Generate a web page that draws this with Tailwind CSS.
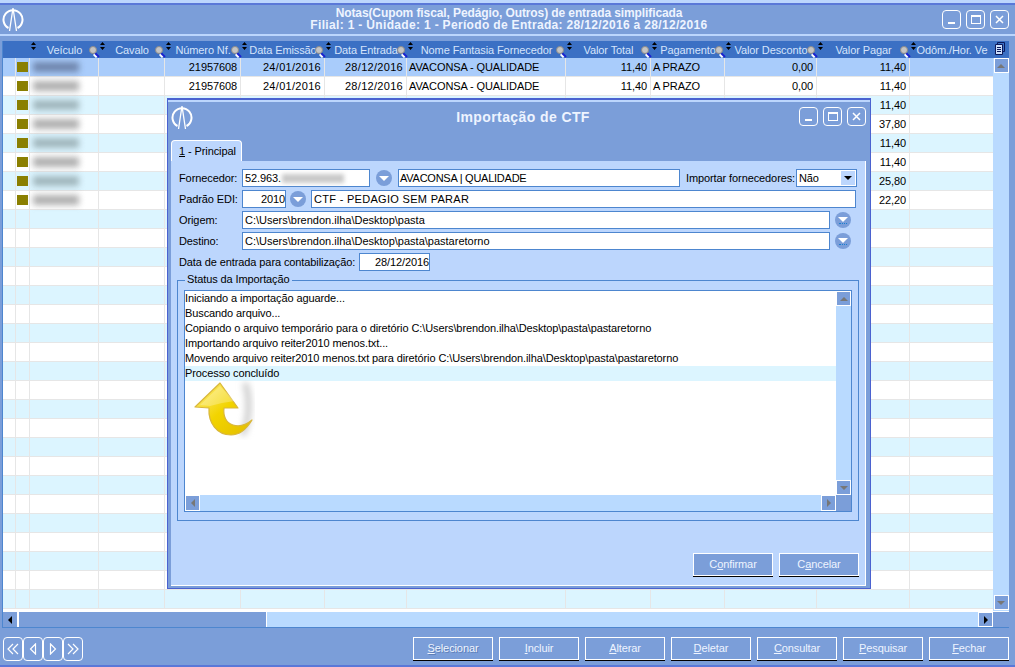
<!DOCTYPE html>
<html lang="pt-BR">
<head>
  <meta charset="UTF-8">
  <title>Notas</title>
  <script src="https://cdn.jsdelivr.net/npm/@tailwindcss/browser@4"></script>
</head>
<body class="w-[1015px] h-[667px] overflow-hidden relative bg-[#7b9ed9] font-['Liberation_Sans',sans-serif] text-[11px] tracking-[-0.1px] leading-none text-black select-none">

  <!-- main window -->
  <div class="h-[5px] bg-[#bcd6fd] border-b-2 border-[#5a78d8]"></div>
  <header class="h-[28px] mx-[3px] flex items-center relative">
    <svg class="w-[22px] h-[24px] -ml-[1px]" viewBox="0 0 22 24" fill="none" stroke="#fff" stroke-width="2"><path d="M6.500 21A9.500 9.500 0 1 1 15.500 21"/><path d="M7.500 24 11 1l3.500 23" stroke-width="1.300"/></svg>
    <div class="flex-1 text-center font-bold text-[#eef4ff] text-[12px] leading-[12px] pl-[52px] whitespace-nowrap">
      <div class="tracking-[-0.1px]">Notas(Cupom fiscal, Pedágio, Outros) de entrada simplificada</div>
      <div class="tracking-[0.33px]">Filial: 1 - Unidade: 1 - Período de Entrada: 28/12/2016 a 28/12/2016</div>
    </div>
    <div class="flex gap-[5px] mr-[3px]">
      <button class="w-[19px] h-[19px] border border-white rounded-[4px] flex items-end justify-center pb-[4px]"><span class="w-[7px] h-[2px] bg-white"></span></button>
      <button class="w-[19px] h-[19px] border border-white rounded-[4px] flex items-center justify-center"><span class="w-[10px] h-[9px] border border-white border-t-2"></span></button>
      <button class="w-[19px] h-[19px] border border-white rounded-[4px] flex items-center justify-center"><svg class="w-[9px] h-[9px]" viewBox="0 0 9 9" stroke="#fff" stroke-width="1.500"><path d="M1 1l7 7M8 1 1 8"/></svg></button>
    </div>
  </header>
  <div class="h-[2px] bg-[#bcd6fd] mt-[1px] mb-[5px]"></div>

  <!-- grid -->
  <section class="mx-[2px] h-[587px] w-[1007px] border-l border-b border-[#4d86cf] flex flex-col relative bg-white">
    <div id="head" class="h-[17px] flex bg-[#3b70c4] text-[#d5e4fb] shrink-0 relative">
      <svg class="absolute right-[4px] top-[1px] w-[10px] h-[13px] z-10" viewBox="0 0 10 13" fill="none" stroke="#0b1a5c"><path d="M2.500 2.500V.5h7v9H8"/><path d="M.5 2.500h7v10h-7z" fill="#cfe0fb"/><path d="M2 5.500h4M2 7.500h4M2 9.500h4"/></svg>
    </div>
    <div class="flex-1 flex min-h-0">
      <div id="rows" class="w-[991px] overflow-hidden"></div>
      <div class="w-[16px] bg-[#b9daff] flex flex-col justify-between items-center pb-[1px]">
        <div class="w-[15px] h-[15px] bg-[#7b9ed9] border border-white flex items-center justify-center"><span class="border-x-[4px] border-x-transparent border-b-[4px] border-b-[#777] mt-[1px]"></span></div>
        <div class="w-[15px] h-[15px] bg-[#7b9ed9] border border-white flex items-center justify-center"><span class="border-x-[4px] border-x-transparent border-t-[4px] border-t-[#777]"></span></div>
      </div>
    </div>
    <div class="h-[16px] shrink-0 flex bg-[#b9daff] border-t border-white">
      <div class="w-[16px] bg-[#7b9ed9] border-r-2 border-white flex items-center justify-center"><span class="border-y-[4px] border-y-transparent border-r-[4px] border-r-black"></span></div>
      <div class="w-[248px] bg-[#7b9ed9] border-r border-white"></div>
      <div class="flex-1"></div>
      <div class="w-[15px] bg-[#7b9ed9] border border-white flex items-center justify-center"><span class="border-y-[4px] border-y-transparent border-l-[4px] border-l-black"></span></div>
      <div class="w-[16px] bg-[#7b9ed9]"></div>
    </div>
  </section>

  <!-- footer -->
  <footer class="flex items-start justify-between pl-[3px] pr-[6px] pt-[9px]">
    <div class="flex">
      <button class="w-[20px] h-[24px] border border-white rounded-[4px] flex items-center justify-center"><svg class="w-[12px] h-[12px]" viewBox="0 0 12 12" fill="none" stroke="#fff" stroke-width="1.200"><path d="M6 1 1 6l5 5M11 1 6 6l5 5"/></svg></button>
      <button class="w-[20px] h-[24px] border border-white rounded-[4px] flex items-center justify-center"><svg class="w-[8px] h-[12px]" viewBox="0 0 8 12" fill="none" stroke="#fff" stroke-width="1.200"><path d="M6.500 1 1.500 6l5 5z"/></svg></button>
      <button class="w-[20px] h-[24px] border border-white rounded-[4px] flex items-center justify-center"><svg class="w-[8px] h-[12px]" viewBox="0 0 8 12" fill="none" stroke="#fff" stroke-width="1.200"><path d="M1.500 1l5 5-5 5z"/></svg></button>
      <button class="w-[20px] h-[24px] border border-white rounded-[4px] flex items-center justify-center"><svg class="w-[12px] h-[12px]" viewBox="0 0 12 12" fill="none" stroke="#fff" stroke-width="1.200"><path d="m1 1 5 5-5 5M6 1l5 5-5 5"/></svg></button>
    </div>
    <div class="flex gap-[6px]">
      <button class="w-[80px] h-[23px] border border-white shadow-[0_1px_0_#000] text-[#eef4ff] [text-shadow:1px_1px_0_#5f7fb8]"><u>S</u>elecionar</button>
      <button class="w-[80px] h-[23px] border border-white shadow-[0_1px_0_#000] text-[#eef4ff]"><u>I</u>ncluir</button>
      <button class="w-[80px] h-[23px] border border-white shadow-[0_1px_0_#000] text-[#eef4ff]"><u>A</u>lterar</button>
      <button class="w-[80px] h-[23px] border border-white shadow-[0_1px_0_#000] text-[#eef4ff]"><u>D</u>eletar</button>
      <button class="w-[80px] h-[23px] border border-white shadow-[0_1px_0_#000] text-[#eef4ff]"><u>C</u>onsultar</button>
      <button class="w-[80px] h-[23px] border border-white shadow-[0_1px_0_#000] text-[#eef4ff]"><u>P</u>esquisar</button>
      <button class="w-[80px] h-[23px] border border-white shadow-[0_1px_0_#000] text-[#eef4ff]"><u>F</u>echar</button>
    </div>
  </footer>
  <div class="absolute left-0 right-0 bottom-0 h-[2px] bg-[#5a78d8]"></div>

  <!-- dialog -->
  <div class="absolute left-[167px] top-[98px] w-[704px] h-[491px] bg-[#7b9ed9] border border-[#4a62d0] border-t-2 flex flex-col pl-[3px] pr-[4px] pb-[2px]">
    <div class="h-[2px] bg-[#bcd6fd] -mx-[3px] -mr-[4px]"></div>
    <div class="h-[27px] flex items-center shrink-0 relative mt-[1px]">
      <svg class="w-[22px] h-[24px]" viewBox="0 0 22 24" fill="none" stroke="#fff" stroke-width="2"><path d="M6.500 21A9.500 9.500 0 1 1 15.500 21"/><path d="M7.500 24 11 1l3.500 23" stroke-width="1.300"/></svg>
      <div class="flex-1 text-center font-bold text-[#eef4ff] text-[14px] tracking-[0.4px] pl-[54px]">Importação de CTF</div>
      <div class="flex gap-[5px]">
        <button class="w-[19px] h-[19px] border border-white rounded-[4px] flex items-end justify-center pb-[4px]"><span class="w-[7px] h-[2px] bg-white"></span></button>
        <button class="w-[19px] h-[19px] border border-white rounded-[4px] flex items-center justify-center"><span class="w-[10px] h-[9px] border border-white border-t-2"></span></button>
        <button class="w-[19px] h-[19px] border border-white rounded-[4px] flex items-center justify-center"><svg class="w-[9px] h-[9px]" viewBox="0 0 9 9" stroke="#fff" stroke-width="1.500"><path d="M1 1l7 7M8 1 1 8"/></svg></button>
      </div>
    </div>
    <div class="mt-[10px] h-[21px] shrink-0 flex">
      <div class="w-[71px] h-[21px] bg-[#bcd6fd] border border-b-0 border-white rounded-t-[4px] flex items-center pl-[7px] whitespace-nowrap"><span><u>1</u> - Principal</span></div>
    </div>
    <div class="flex-1 bg-[#bcd6fd] border-r border-b border-white pt-[8px] pl-[8px] pr-[6px] flex flex-col min-h-0 whitespace-nowrap">
      <div class="flex items-center h-[18px]">
        <span class="w-[63px]">Fornecedor:</span>
        <div class="w-[128px] h-[18px] bg-white border border-[#4d86cf] flex items-center pl-[2px]">52.963.<span class="w-[62px] h-[9px] ml-[1px] bg-[#c9c9c9] blur-[2px]"></span></div>
        <button class="w-[16px] h-[16px] ml-[6px] rounded-full bg-[#7b9ed9] flex items-center justify-center"><span class="border-x-[5px] border-x-transparent border-t-[5px] border-t-white"></span></button>
        <div class="w-[282px] h-[18px] ml-[6px] bg-white border border-[#4d86cf] flex items-center pl-[1px] tracking-[-0.25px]">AVACONSA | QUALIDADE</div>
        <span class="ml-[6px] w-[110px]">Importar fornecedores:</span>
        <div class="w-[61px] h-[18px] bg-white border border-[#4d86cf] flex items-center justify-between pl-[2px]">Não<span class="w-[14px] h-[14px] mr-[1px] bg-[#bcd6fd] flex items-center justify-center"><span class="border-x-[4px] border-x-transparent border-t-[4px] border-t-black"></span></span></div>
      </div>
      <div class="flex items-center h-[18px] mt-[3px]">
        <span class="w-[63px]">Padrão EDI:</span>
        <div class="w-[44px] h-[18px] bg-white border border-[#4d86cf] flex items-center justify-end">2010</div>
        <button class="w-[16px] h-[16px] ml-[4px] rounded-full bg-[#7b9ed9] flex items-center justify-center"><span class="border-x-[5px] border-x-transparent border-t-[5px] border-t-white"></span></button>
        <div class="w-[545px] h-[18px] ml-[5px] bg-white border border-[#4d86cf] flex items-center pl-[2px] tracking-[0.3px]">CTF - PEDAGIO SEM PARAR</div>
      </div>
      <div class="flex items-center h-[18px] mt-[3px]">
        <span class="w-[63px]">Origem:</span>
        <div class="w-[588px] h-[18px] bg-white border border-[#4d86cf] flex items-center pl-[2px] tracking-normal">C:\Users\brendon.ilha\Desktop\pasta</div>
        <button class="w-[16px] h-[16px] ml-[5px] rounded-full bg-[#7b9ed9] flex flex-col items-center justify-center gap-[1px]"><span class="border-x-[5px] border-x-transparent border-t-[5px] border-t-white"></span><span class="w-[8px] h-[1px] border-t border-dotted border-[#1a7fd0]"></span></button>
      </div>
      <div class="flex items-center h-[18px] mt-[3px]">
        <span class="w-[63px]">Destino:</span>
        <div class="w-[588px] h-[18px] bg-white border border-[#4d86cf] flex items-center pl-[2px] tracking-normal">C:\Users\brendon.ilha\Desktop\pasta\pastaretorno</div>
        <button class="w-[16px] h-[16px] ml-[5px] rounded-full bg-[#7b9ed9] flex flex-col items-center justify-center gap-[1px]"><span class="border-x-[5px] border-x-transparent border-t-[5px] border-t-white"></span><span class="w-[8px] h-[1px] border-t border-dotted border-[#1a7fd0]"></span></button>
      </div>
      <div class="flex items-center h-[18px] mt-[3px]">
        <span class="w-[180px]">Data de entrada para contabilização:</span>
        <div class="w-[71px] h-[18px] bg-white border border-[#4d86cf] flex items-center justify-end">28/12/2016</div>
      </div>

      <fieldset class="border border-[#4d86cf] -ml-[2px] mt-[3px] w-[682px] h-[247px] px-[6px] pb-[6px]">
        <legend class="ml-[1px] px-[2px] h-[13px]">Status da Importação</legend>
        <div class="h-[222px] mt-[3px] bg-white border border-[#4d86cf] relative flex flex-col">
          <div class="flex-1 flex min-h-0">
            <div class="flex-1 leading-[15px]">
              <div class="h-[15px]">Iniciando a importação aguarde...</div>
              <div class="h-[15px]">Buscando arquivo...</div>
              <div class="h-[15px]">Copiando o arquivo temporário para o diretório C:\Users\brendon.ilha\Desktop\pasta\pastaretorno</div>
              <div class="h-[15px]">Importando arquivo reiter2010 menos.txt...</div>
              <div class="h-[15px]">Movendo arquivo reiter2010 menos.txt para diretório C:\Users\brendon.ilha\Desktop\pasta\pastaretorno</div>
              <div class="h-[15px] bg-[#dcf5ff]">Processo concluído</div>
            </div>
            <div class="w-[15px] bg-[#b9daff] flex flex-col justify-between">
              <div class="w-[15px] h-[15px] bg-[#7b9ed9] border border-white flex items-center justify-center"><span class="border-x-[4px] border-x-transparent border-b-[4px] border-b-[#777]"></span></div>
              <div class="w-[15px] h-[15px] bg-[#7b9ed9] border border-white flex items-center justify-center"><span class="border-x-[4px] border-x-transparent border-t-[4px] border-t-[#777]"></span></div>
            </div>
          </div>
          <div class="h-[16px] flex bg-[#b9daff] shrink-0">
            <div class="w-[15px] bg-[#7b9ed9] border border-white flex items-center justify-center"><span class="border-y-[4px] border-y-transparent border-r-[4px] border-r-[#777]"></span></div>
            <div class="flex-1"></div>
            <div class="w-[15px] bg-[#7b9ed9] border border-white flex items-center justify-center"><span class="border-y-[4px] border-y-transparent border-l-[4px] border-l-[#777]"></span></div>
            <div class="w-[15px] bg-[#7b9ed9]"></div>
          </div>
          <svg class="absolute left-[6px] top-[89px] w-[66px] h-[60px]" viewBox="0 0 66 60">
            <defs>
              <linearGradient id="g" x1="0" y1="0" x2="1" y2="1"><stop offset="0" stop-color="#fff08a"/><stop offset="0.5" stop-color="#f2d400"/><stop offset="1" stop-color="#e3bd00"/></linearGradient>
              <filter id="b" x="-100%" y="-30%" width="300%" height="160%"><feGaussianBlur stdDeviation="3"/></filter>
            </defs>
            <path d="M54 3c5 14 5 38-3 52" stroke="#ccc" stroke-width="6" fill="none" filter="url(#b)"/>
            <path d="M29 3 4 27l14 1c-1 15 8 27 22 27 8 0 15-5 21-15-6 5-13 7-19 5-7-2-10-9-9-17l14 0z" fill="url(#g)" stroke="#d9b73c" stroke-width="1.200" stroke-linejoin="round"/>
            <path d="M29 6 9 25l10 1 12-3 13-2z" fill="#fff" opacity="0.25"/>
          </svg>
        </div>
      </fieldset>

      <div class="flex justify-end gap-[6px] mt-[32px]">
        <button class="w-[80px] h-[23px] bg-[#7b9ed9] border border-white shadow-[0_1px_0_#000] text-[#eef4ff]">C<u>o</u>nfirmar</button>
        <button class="w-[80px] h-[23px] bg-[#7b9ed9] border border-white shadow-[0_1px_0_#000] text-[#eef4ff]">C<u>a</u>ncelar</button>
      </div>
    </div>
  </div>

  <script>
    // column widths taken from the grid lines
    var cols = [
      { w: 13, t: '' }, { w: 14, t: '' },
      { w: 69, t: 'Veículo' }, { w: 66, t: 'Cavalo' }, { w: 76, t: 'Número Nf.' },
      { w: 84, t: 'Data Emissão' }, { w: 82, t: 'Data Entrada' }, { w: 159, t: 'Nome Fantasia Fornecedor' },
      { w: 85, t: 'Valor Total' }, { w: 74, t: 'Pagamento' }, { w: 92, t: 'Valor Desconto' },
      { w: 93, t: 'Valor Pagar' }, { w: 84, t: 'Odôm./Hor. Ve' }
    ];
    var mag = '<svg class="absolute right-[-1px] top-[5px] w-[11px] h-[12px] z-10" viewBox="0 0 11 12"><path d="M5 8l3 3" stroke="#fff" stroke-width="3"/><path d="M6 7l4 4" stroke="#1a22d0" stroke-width="2"/><circle cx="4" cy="4" r="3.500" fill="#c4c4c4" stroke="#8a8a8a"/></svg>';
    var sort = '<svg class="absolute left-[1px] top-[1px] w-[5px] h-[8px] z-10" viewBox="0 0 5 8" fill="#000"><path d="M2.500 0 5 3H0zM2.500 8 0 5h5z"/></svg>';
    var head = '';
    cols.forEach(function (c, i) {
      head += '<div class="relative flex items-center justify-center whitespace-nowrap shrink-0 pt-[1px]" style="width:' + c.w + 'px">' +
        (i > 1 ? sort : '') + c.t + (i > 1 && i < 12 ? mag : '') + '</div>';
    });
    document.getElementById('head').insertAdjacentHTML('afterbegin', head);

    var data = [
      ['21957608', '24/01/2016', '28/12/2016', 'AVACONSA - QUALIDADE', '11,40', 'A PRAZO', '0,00', '11,40'],
      ['21957608', '24/01/2016', '28/12/2016', 'AVACONSA - QUALIDADE', '11,40', 'A PRAZO', '0,00', '11,40'],
      ['', '', '', '', '', '', '', '11,40'], ['', '', '', '', '', '', '', '37,80'],
      ['', '', '', '', '', '', '', '11,40'], ['', '', '', '', '', '', '', '11,40'],
      ['', '', '', '', '', '', '', '25,80'], ['', '', '', '', '', '', '', '22,20']
    ];
    var html = '';
    for (var r = 0; r < 29; r++) {
      var bg = r === 0 ? 'bg-[#a9ccfb]' : (r % 2 ? 'bg-white' : 'bg-[#dcf5ff]');
      var d = data[r];
      var row = '<div class="flex h-[19px] border-b border-[#e6e6e6] ' + bg + '">';
      cols.forEach(function (c, i) {
        var inner = '';
        var align = 'justify-end pr-[3px]';
        if (i === 1 && d) inner = '<span class="w-[11px] h-[10px] bg-[#8a7f00] shrink-0 ml-[1px]"></span>';
        if (i === 2 && d) inner = '<span class="w-[46px] h-[10px] ml-[3px] blur-[3px] ' + (r === 0 ? 'bg-[#6f86ad]' : r % 2 ? 'bg-[#b0b0b0]' : 'bg-[#a0b6bd]') + '"></span>';
        if (d && i >= 4 && i <= 11 && d[i - 4]) inner = d[i - 4];
        if (i === 5 || i === 6) align = 'justify-end pr-[3px] tracking-[0.3px]';
        if (i === 7 || i === 9) align = 'justify-start pl-[2px]';
        if (i === 1 || i === 2) align = 'justify-start';
        row += '<div class="flex items-center whitespace-nowrap shrink-0 border-r border-[#e6e6e6] ' + align + '" style="width:' + c.w + 'px">' + inner + '</div>';
      });
      html += row + '</div>';
    }
    document.getElementById('rows').innerHTML = html;
  </script>
</body>
</html>
